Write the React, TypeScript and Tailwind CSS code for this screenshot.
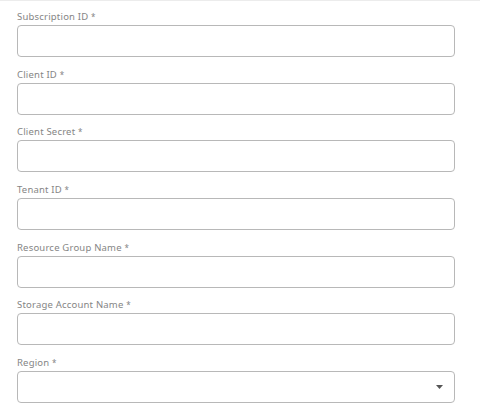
const fields = [
  "Subscription ID",
  "Client ID",
  "Client Secret",
  "Tenant ID",
  "Resource Group Name",
  "Storage Account Name",
];

function Label({ text }: { text: string }) {
  return (
    <label className="block text-[9.5px] leading-[12px] text-[#858585] mb-[2px] tracking-[0.2px]">
      {text} <span className="text-[8px] align-top">*</span>
    </label>
  );
}

export default function App() {
  return (
    <div
      className="w-[480px] h-[412px] bg-white border-t border-[#ececec] overflow-hidden"
      style={{ fontFamily: '"Noto Sans", "Open Sans", sans-serif' }}
    >
      <div className="pl-[17px] pt-[10px] flex flex-col gap-[11.7px]">
        {fields.map((f) => (
          <div key={f}>
            <Label text={f} />
            <input
              type="text"
              className="block w-[438px] h-[32px] rounded-[4px] border border-[#b8b8b8] bg-white outline-none px-2 text-sm"
            />
          </div>
        ))}
        <div>
          <Label text="Region" />
          <div className="w-[438px] h-[32px] rounded-[4px] border border-[#b8b8b8] bg-white flex items-center justify-end pr-[11px]">
            <svg width="7" height="4" viewBox="0 0 7 4">
              <path d="M0 0 L7 0 L3.5 4 Z" fill="#555" />
            </svg>
          </div>
        </div>
      </div>
    </div>
  );
}
